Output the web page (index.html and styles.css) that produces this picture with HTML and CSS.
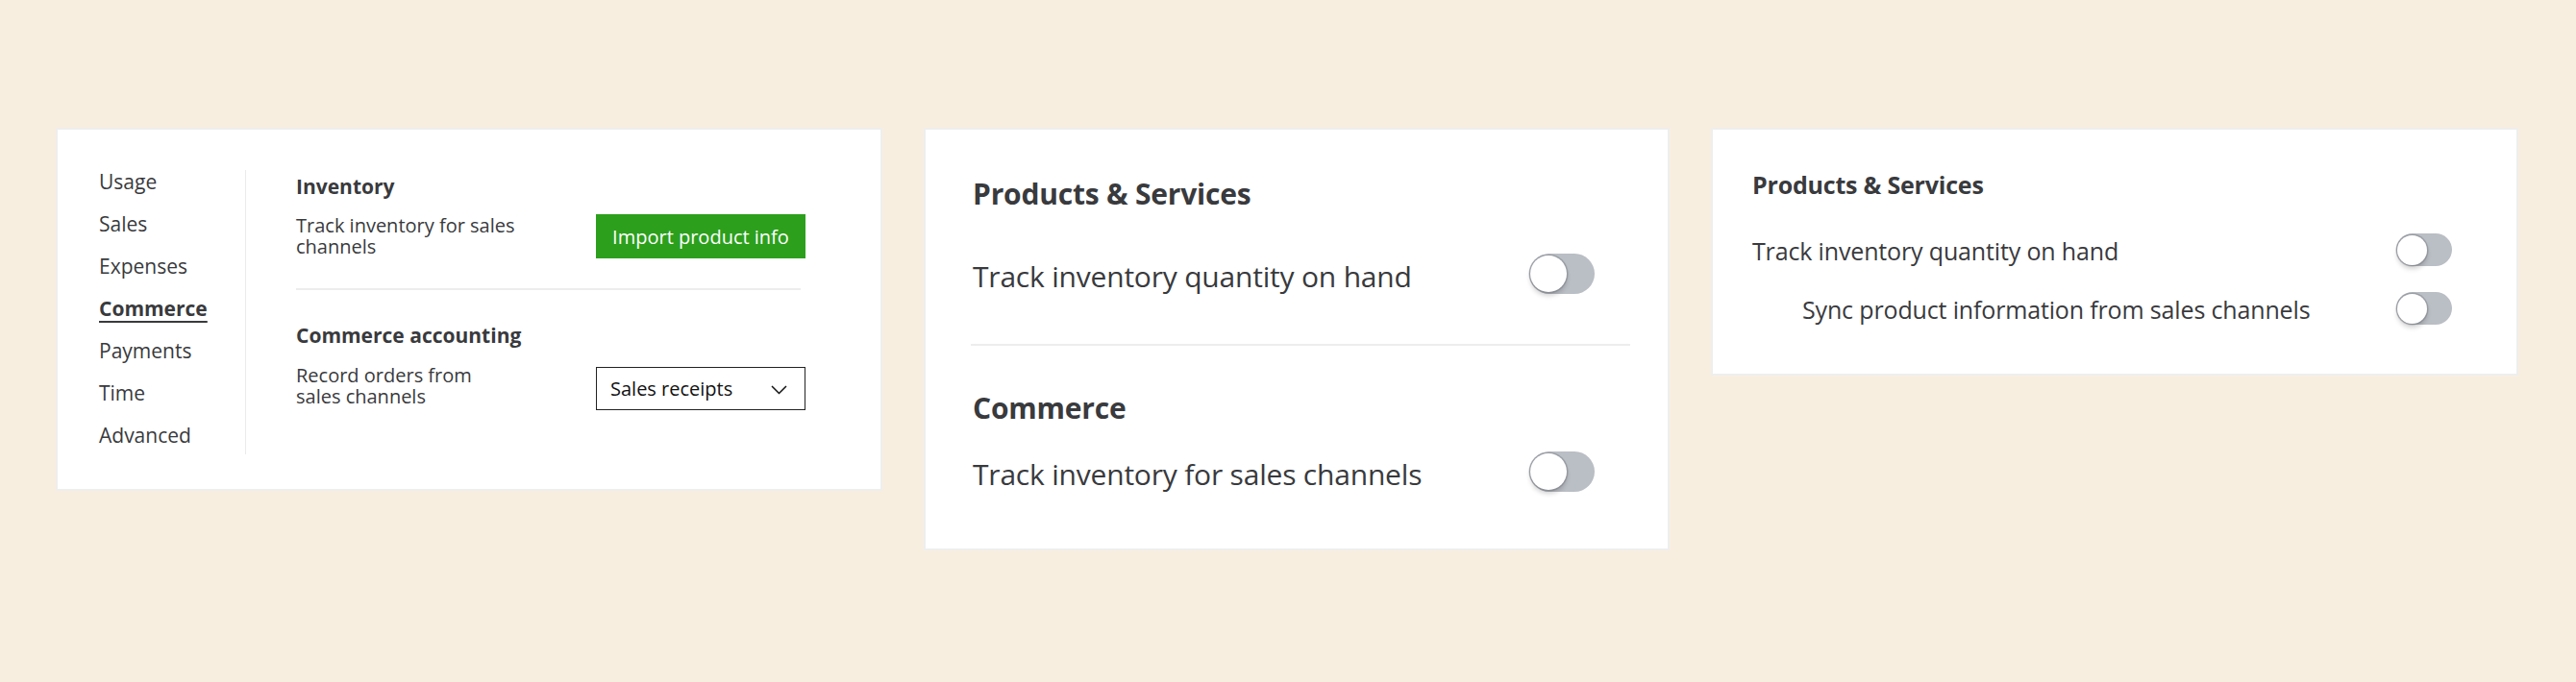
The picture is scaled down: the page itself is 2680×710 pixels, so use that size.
FILE: index.html
```html
<!DOCTYPE html>
<html lang="en">
<head>
<meta charset="utf-8">
<title>Commerce settings</title>
<link rel="stylesheet" href="styles.css">
</head>
<body>
<main class="board">

  <section class="card card-settings">
    <nav class="side-nav">
      <a class="nav-item">Usage</a>
      <a class="nav-item">Sales</a>
      <a class="nav-item">Expenses</a>
      <a class="nav-item is-active">Commerce</a>
      <a class="nav-item">Payments</a>
      <a class="nav-item">Time</a>
      <a class="nav-item">Advanced</a>
    </nav>
    <div class="vline"></div>
    <div class="settings-col">
      <h3 class="sub-title">Inventory</h3>
      <div class="set-row first-row">
        <p class="set-label">Track inventory for sales<br>channels</p>
        <button class="btn-green">Import product info</button>
      </div>
      <hr class="divider-small">
      <h3 class="sub-title second-title">Commerce accounting</h3>
      <div class="set-row second-row">
        <p class="set-label shift-up">Record orders from<br>sales channels</p>
        <div class="select">
          <span>Sales receipts</span>
          <svg class="chev" width="17" height="10" viewBox="0 0 17 10"><polyline points="1,1 8.5,8.5 16,1" fill="none" stroke="#111" stroke-width="1.5"/></svg>
        </div>
      </div>
    </div>
  </section>

  <section class="card card-large">
    <h2 class="big-title">Products &amp; Services</h2>
    <div class="big-row row-one">
      <span class="big-label">Track inventory quantity on hand</span>
      <span class="toggle toggle-lg"><span class="knob"></span></span>
    </div>
    <hr class="divider-large">
    <h2 class="big-title title-two">Commerce</h2>
    <div class="big-row row-two">
      <span class="big-label">Track inventory for sales channels</span>
      <span class="toggle toggle-lg"><span class="knob"></span></span>
    </div>
  </section>

  <section class="card card-medium">
    <h2 class="mid-title">Products &amp; Services</h2>
    <div class="mid-row mid-first">
      <span class="mid-label">Track inventory quantity on hand</span>
      <span class="toggle toggle-md"><span class="knob"></span></span>
    </div>
    <div class="mid-row mid-second">
      <span class="mid-label indent">Sync product information from sales channels</span>
      <span class="toggle toggle-md"><span class="knob"></span></span>
    </div>
  </section>

</main>
</body>
</html>
```

FILE: styles.css
```css
* { box-sizing: border-box; }

html, body {
  margin: 0;
  padding: 0;
}

body {
  background: #f8eee0;
  font-family: "Open Sans", "Noto Sans", "Liberation Sans", sans-serif;
  color: #393a3d;
  width: 2680px;
  height: 710px;
  overflow: hidden;
}

.board {
  display: flex;
  align-items: flex-start;
  gap: 43px;
  padding: 133px 0 0 58px;
}

.card {
  background: #ffffff;
  border: 2px solid #eeeeee;
}

/* ---------- Card 1 ---------- */
.card-settings {
  width: 860px;
  display: flex;
  align-items: stretch;
  padding: 32px 78px 34px 43px;
}

.side-nav {
  width: 152px;
  display: flex;
  flex-direction: column;
}

.nav-item {
  font-size: 21px;
  line-height: 44px;
  height: 44px;
  color: #393a3d;
  white-space: nowrap;
}

.nav-item.is-active {
  font-weight: 700;
  text-decoration: underline;
  text-decoration-thickness: 2px;
  text-underline-offset: 5px;
}

.vline {
  width: 1px;
  background: #ebebeb;
  margin: 10px 0 2px;
}

.settings-col {
  width: 530px;
  margin-left: 52px;
  padding-top: 14px;
  display: flex;
  flex-direction: column;
}

.sub-title {
  margin: 0;
  font-size: 21px;
  line-height: 26px;
  font-weight: 700;
  color: #393a3d;
}

.second-title {
  margin-top: 34px;
}

.set-row {
  display: flex;
  align-items: center;
  justify-content: space-between;
}

.first-row { margin-top: 16px; }
.second-row { margin-top: 20px; }

.set-label {
  margin: 0;
  font-size: 20px;
  line-height: 22px;
}

.shift-up {
  margin-top: -6px;
}

.btn-green {
  width: 218px;
  height: 46px;
  border: 0;
  background: #2ca01c;
  color: #ffffff;
  font-family: inherit;
  font-size: 20px;
  padding: 0;
  text-align: center;
}

.divider-small {
  margin: 31px 5px 0 0;
  border: 0;
  height: 2px;
  background: #ededed;
}

.select {
  width: 218px;
  height: 45px;
  border: 1.5px solid #222222;
  display: flex;
  align-items: center;
  justify-content: space-between;
  padding: 0 18px 0 14px;
  font-size: 20px;
  color: #111111;
}

.chev { display: block; margin-top: 2px; }

/* ---------- Toggles ---------- */
.toggle {
  display: flex;
  align-items: center;
  flex: none;
  background: #babec5;
}

.toggle-lg {
  width: 68px;
  height: 42px;
  border-radius: 21px;
}

.toggle-md {
  width: 58px;
  height: 34px;
  border-radius: 17px;
}

.knob {
  display: block;
  background: #ffffff;
  border-radius: 50%;
  box-shadow: 0 0 0 1.5px rgba(120, 124, 130, 0.45), 0 4px 5px rgba(0, 0, 0, 0.18);
}

.toggle-lg .knob {
  width: 38px;
  height: 38px;
  margin-left: 1px;
}

.toggle-md .knob {
  width: 31px;
  height: 31px;
  margin-left: 1px;
}

/* ---------- Card 2 ---------- */
.card-large {
  width: 776px;
  padding: 49px 39px 59px 49px;
}

.big-title {
  margin: 0;
  font-size: 30px;
  line-height: 36px;
  font-weight: 700;
  color: #393a3d;
  letter-spacing: -0.2px;
}

.title-two { margin-top: 47px; }

.big-row {
  display: flex;
  align-items: center;
  justify-content: space-between;
  padding-right: 37px;
}

.row-one { margin-top: 44px; }
.row-two { margin-top: 27px; }

.big-label {
  font-size: 30px;
  line-height: 37px;
  padding-top: 5px;
  letter-spacing: -0.2px;
}

.divider-large {
  margin: 52px 0 0 -2px;
  border: 0;
  height: 2px;
  background: #ededed;
}

/* ---------- Card 3 ---------- */
.card-medium {
  width: 840px;
  padding: 42px 67px 51px 41px;
}

.mid-title {
  margin: 0;
  font-size: 25px;
  line-height: 30px;
  font-weight: 700;
  color: #393a3d;
  letter-spacing: -0.2px;
}

.mid-row {
  display: flex;
  align-items: center;
  justify-content: space-between;
}

.mid-first { margin-top: 36px; }
.mid-second { margin-top: 27px; }

.mid-label {
  font-size: 25px;
  line-height: 32px;
  padding-top: 2px;
  letter-spacing: -0.15px;
}

.indent { margin-left: 52px; }
```
